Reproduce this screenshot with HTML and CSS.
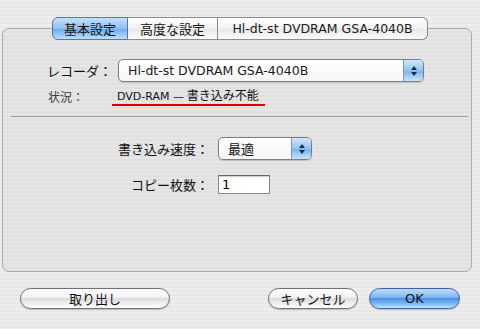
FILE: index.html
```html
<!DOCTYPE html>
<html lang="ja">
<head>
  <meta charset="UTF-8" />
  <title>ディスク作成</title>
  <link rel="stylesheet" href="styles.css">
</head>
<body>
  <div class="sheet">
    <div class="tabs">
      <div class="tab selected">基本設定</div>
      <div class="tab">高度な設定</div>
      <div class="tab latin">Hl-dt-st DVDRAM GSA-4040B</div>
    </div>

    <div class="panel">
      <div class="row recorder">
        <span class="label">レコーダ：</span>
        <div class="popup wide">
          <span class="popup-text latin">Hl-dt-st DVDRAM GSA-4040B</span>
          <span class="stepper">
            <svg width="8" height="12" viewBox="0 0 8 12"><path d="M4 1 L7 5 L1 5 Z M4 11 L7 7 L1 7 Z" fill="#1a2a44"/></svg>
          </span>
        </div>
      </div>

      <div class="row status">
        <span class="label">状況：</span>
        <span class="status-value"><span class="latin-small">DVD-RAM —</span> 書き込み不能</span>
      </div>

      <div class="separator"></div>

      <div class="row speed">
        <span class="label">書き込み速度：</span>
        <div class="popup narrow">
          <span class="popup-text">最適</span>
          <span class="stepper">
            <svg width="8" height="12" viewBox="0 0 8 12"><path d="M4 1 L7 5 L1 5 Z M4 11 L7 7 L1 7 Z" fill="#1a2a44"/></svg>
          </span>
        </div>
      </div>

      <div class="row copies">
        <span class="label">コピー枚数：</span>
        <input class="field" value="1" />
      </div>
    </div>

    <div class="buttons">
      <button class="btn eject">取り出し</button>
      <div class="spacer"></div>
      <button class="btn cancel">キャンセル</button>
      <button class="btn default">OK</button>
    </div>
  </div>
</body>
</html>
```

FILE: styles.css
```css
body {
  margin: 0;
  width: 480px;
  height: 329px;
  overflow: hidden;
  font-family: "Noto Sans CJK JP", "DejaVu Sans", sans-serif;
  font-size: 13px;
  color: #111;
  background: repeating-linear-gradient(#eeeeee 0 2px, #e8e8e8 2px 4px);
}
.latin {
  font-family: "DejaVu Sans", "Noto Sans CJK JP", sans-serif;
  font-size: 12.5px;
  color: #1a1a1a;
}
.latin-small {
  font-family: "DejaVu Sans", sans-serif;
  font-size: 11px;
}
.sheet {
  padding-top: 17px;
}
.tabs {
  display: flex;
  margin-left: 52px;
  position: relative;
  z-index: 2;
}
.tab {
  height: 21px;
  line-height: 21px;
  padding: 0 14px;
  border: 1px solid #8c8c8c;
  border-left: none;
  background: linear-gradient(#ffffff, #f1f1f1 50%, #e6e6e6 51%, #fbfbfb);
}
.tab:first-child {
  border-left: 1px solid #6a87b8;
  border-radius: 6px 0 0 6px;
}
.tab:last-child {
  border-radius: 0 6px 6px 0;
}
.tab.selected {
  width: 74px;
  padding: 0;
  text-align: center;
  border-color: #5577aa;
  background: linear-gradient(#c6e0fb, #8fc0f2 50%, #6aa8ec 51%, #bde0ff);
}
.tab:nth-child(2) {
  width: 89px;
  padding: 0;
  text-align: center;
}
.tab.latin {
  width: 209px;
  padding: 0;
  text-align: center;
}
.panel {
  margin: -12px 8px 0 2px;
  height: 212px;
  padding-top: 30px;
  border: 1px solid #a8a8a8;
  border-radius: 7px;
  background: repeating-linear-gradient(#e6e6e6 0 2px, #e0e0e0 2px 4px);
}
.row {
  display: flex;
  align-items: center;
}
.label {
  text-align: right;
  flex: none;
}
.recorder {
  height: 23px;
}
.recorder .label {
  width: 109px;
  margin-right: 6px;
}
.popup {
  display: flex;
  align-items: center;
  height: 21px;
  border: 1px solid #7d7d7d;
  border-radius: 5px;
  background: linear-gradient(#ffffff, #f6f6f6);
  box-shadow: 0 1px 1px rgba(0,0,0,0.15);
  overflow: hidden;
}
.popup.wide {
  width: 304px;
}
.popup.narrow {
  width: 92px;
}
.popup-text {
  flex: 1;
  padding-left: 9px;
}
.stepper {
  width: 19px;
  height: 21px;
  display: flex;
  align-items: center;
  justify-content: center;
  border-left: 1px solid #7d99c2;
  background: linear-gradient(#d2e6fc, #94c3f3 50%, #74b0ef 51%, #c7e4ff);
}
.status {
  height: 16px;
  margin-top: 6px;
}
.status .label {
  width: 45px;
  text-align: left;
  margin-left: 45px;
  margin-right: 19px;
  color: #3a3a3a;
  font-size: 12px;
}
.status-value {
  padding: 0 6px 0 5px;
  border-bottom: 2px solid #e00000;
  line-height: 15px;
  font-size: 12px;
}
.separator {
  height: 1px;
  background: #9a9a9a;
  margin: 12px 3px 0 8px;
}
.speed {
  margin-top: 20px;
  height: 23px;
}
.speed .label {
  width: 206px;
  margin-right: 9px;
}
.copies {
  margin-top: 15px;
}
.copies .label {
  width: 206px;
  margin-right: 9px;
}
.field {
  width: 44px;
  height: 15px;
  padding: 1px 3px;
  margin: 0;
  border: 1px solid #888;
  border-top-color: #666;
  box-shadow: inset 0 1px 1px rgba(0,0,0,0.2);
  font-family: "DejaVu Sans", sans-serif;
  font-size: 13px;
  background: #fff;
}
.buttons {
  display: flex;
  margin: 16px 20px 0 20px;
}
.spacer {
  flex: 1;
}
.btn {
  height: 21px;
  margin: 0;
  padding: 0;
  font-family: "Noto Sans CJK JP", sans-serif;
  font-size: 13px;
  color: #111;
  border: 1px solid #707070;
  border-radius: 11px;
  background: linear-gradient(#ffffff, #f2f2f2 45%, #dcdcdc 50%, #f4f4f4 85%, #ffffff);
  box-shadow: 0 1px 1px rgba(0,0,0,0.2);
}
.eject {
  width: 150px;
}
.cancel {
  width: 90px;
  margin-right: 11px;
}
.default {
  width: 91px;
  font-family: "DejaVu Sans", sans-serif;
  border-color: #3c64a8;
  background: linear-gradient(#bfdcfb, #7eb5f0 45%, #4a90e4 50%, #8ec8f8 85%, #c9eaff);
}
```
